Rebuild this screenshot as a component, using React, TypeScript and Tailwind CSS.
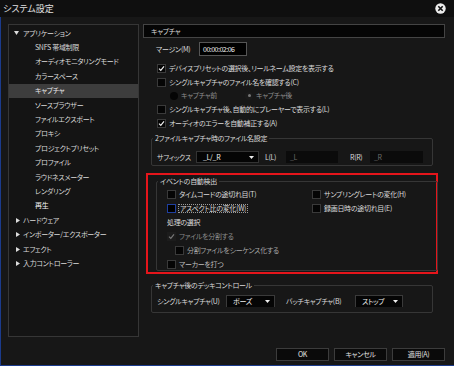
import React from 'react'

const TREE = [
  { label: 'アプリケーション', level: 0, open: true },
  { label: 'SNFS 帯域制限', level: 1 },
  { label: 'オーディオモニタリングモード', level: 1 },
  { label: 'カラースペース', level: 1 },
  { label: 'キャプチャ', level: 1, selected: true },
  { label: 'ソースブラウザー', level: 1 },
  { label: 'ファイルエクスポート', level: 1 },
  { label: 'プロキシ', level: 1 },
  { label: 'プロジェクトプリセット', level: 1 },
  { label: 'プロファイル', level: 1 },
  { label: 'ラウドネスメーター', level: 1 },
  { label: 'レンダリング', level: 1 },
  { label: '再生', level: 1, bright: true },
  { label: 'ハードウェア', level: 0 },
  { label: 'インポーター/エクスポーター', level: 0 },
  { label: 'エフェクト', level: 0 },
  { label: '入力コントローラー', level: 0 },
]

function Check({ checked = false, focused = false, disabled = false }: { checked?: boolean; focused?: boolean; disabled?: boolean }) {
  return (
    <span
      className={
        'w-[9px] h-[9px] shrink-0 flex items-center justify-center border ' +
        (disabled ? 'bg-[#1c1c1c] border-[#1c1c1c]' : focused ? 'bg-black border-[#1f3f9f]' : 'bg-[#050505] border-[#3a3a3a]')
      }
    >
      {checked && (
        <svg width="7" height="7" viewBox="0 0 7 7">
          <path d="M1 3.6 L2.8 5.4 L6 1.4" fill="none" stroke={disabled ? '#777' : '#f0f0f0'} strokeWidth="1.2" />
        </svg>
      )}
    </span>
  )
}

function Row({ label, checked, focused, disabled, muted, className = '' }: { label: string; checked?: boolean; focused?: boolean; disabled?: boolean; muted?: string; className?: string }) {
  return (
    <div className={'flex items-center h-[14px] gap-[3px] whitespace-nowrap ' + className}>
      <Check checked={checked} focused={focused} disabled={disabled} />
      <span className={(muted ?? '') + (focused ? ' outline outline-1 outline-dotted outline-[#9a9a9a] px-[1px]' : '')}>{label}</span>
    </div>
  )
}

function Arrow() {
  return (
    <svg width="5" height="5" viewBox="0 0 5 5" className="ml-[2px]">
      <path d="M0 1 L5 1 L2.5 4 Z" fill="#eee" />
    </svg>
  )
}

function Select({ value, w, legendLike = false }: { value: string; w: string; legendLike?: boolean }) {
  return (
    <div
      className={
        w +
        ' h-[12px] shrink-0 bg-[#050505] flex items-center justify-between pl-[6px] pr-[4px] text-[#eee] ' +
        (legendLike ? 'border-t border-x border-[#3a3a3a]' : 'border border-[#333]')
      }
    >
      <span>{value}</span>
      <Arrow />
    </div>
  )
}

function Group({ title, className = '', children }: { title: string; className?: string; children: React.ReactNode }) {
  return (
    <div className={'relative ml-[8px] w-[282px] border border-[#363636] rounded-[2px] ' + className}>
      <span className="absolute -top-[6px] left-[1px] bg-[#171717] px-[2px] leading-[11px]">{title}</span>
      {children}
    </div>
  )
}

export default function App() {
  return (
    <div className="w-[454px] h-[366px] bg-[#171717] flex flex-col text-[7px] tracking-[-0.3px] leading-none whitespace-nowrap text-[#dadada] font-['Noto_Sans_CJK_JP','Noto_Sans',sans-serif] [font-feature-settings:'palt']">
      <div className="h-[17px] bg-[#0f0f0f] flex items-center justify-between pl-[3px] pr-[8px]">
        <span className="text-[9px] tracking-normal text-[#e0e0e0]">システム設定</span>
        <svg width="11" height="11" viewBox="0 0 11 11">
          <circle cx="5.5" cy="5.5" r="5.2" fill="#ececec" />
          <path d="M3.3 3.3 L7.7 7.7 M7.7 3.3 L3.3 7.7" stroke="#111" strokeWidth="1.6" />
        </svg>
      </div>

      <div className="flex-1 flex border-l border-b border-[#1b3b8c] pl-[7px] pt-[7px]">
        <div className="w-[131px] h-[313px] border border-[#363636] bg-[#141414] pt-[1px]">
          {TREE.map((item) => (
            <div
              key={item.label}
              className={
                'h-[14.4px] flex items-center ' +
                (item.selected ? 'bg-[#3d3d3d] text-[#e8e8e8] ' : '') +
                (item.bright ? 'text-[#f4f4f4] ' : '') +
                (item.level === 0 ? 'pl-[5px]' : 'pl-[26px]')
              }
            >
              {item.level === 0 && (
                <span className="w-[9px] flex items-center">
                  {item.open ? (
                    <svg width="5" height="4" viewBox="0 0 5 4">
                      <path d="M0 0 L5 0 L2.5 4 Z" fill="#ddd" />
                    </svg>
                  ) : (
                    <svg width="4" height="5" viewBox="0 0 4 5" className="ml-[2px]">
                      <path d="M0 0 L4 2.5 L0 5 Z" fill="#ddd" />
                    </svg>
                  )}
                </span>
              )}
              <span>{item.label}</span>
            </div>
          ))}
        </div>

        <div className="ml-[4px] w-[302px] flex flex-col">
          <div className="h-[14px] border border-[#444] bg-[#050505] pl-[7px] flex items-center">キャプチャ</div>

          <div className="mt-[4px] h-[14px] flex items-center pl-[13px]">
            <span className="w-[43px]">マージン(M)</span>
            <div className="w-[48px] h-[14px] border border-[#555] bg-black flex items-center pl-[3px] text-[#f2f2f2] tracking-[-0.5px]">
              00:00:02:06
            </div>
          </div>

          <div className="mt-[5px] pl-[14px]">
            <Row label="デバイスプリセットの選択後、リールネーム設定を表示する" checked className="h-[13px]" />
            <Row label="シングルキャプチャのファイル名を確認する(C)" className="h-[13px]" />
            <div className="h-[13px] flex items-center pl-[13px] text-[#8c8c8c]">
              <div className="w-[75px] flex items-center gap-[3px]">
                <span className="w-[8px] h-[8px] rounded-full bg-[#050505]" />
                <span>キャプチャ前</span>
              </div>
              <div className="flex items-center gap-[3px]">
                <span className="w-[8px] h-[8px] rounded-full bg-[#1a1a1a] flex items-center justify-center">
                  <span className="w-[3px] h-[3px] rounded-full bg-[#777]" />
                </span>
                <span>キャプチャ後</span>
              </div>
            </div>
            <Row label="シングルキャプチャ後、自動的にプレーヤーで表示する(L)" className="h-[13px]" />
            <Row label="オーディオのエラーを自動補正する(A)" checked className="h-[13px]" />
          </div>

          <Group title="2ファイルキャプチャ時のファイル名設定" className="mt-[8px] h-[28px]">
            <div className="pt-[12px] pl-[5px] flex items-center">
              <span className="w-[39px]">サフィックス</span>
              <Select value="_L/_R" w="w-[63px]" />
              <span className="ml-[6px] w-[21px]">L(L)</span>
              <div className="w-[52px] h-[12px] bg-[#0b0b0b] pl-[4px] flex items-center text-[#6c6c6c]">_L</div>
              <span className="ml-[12px] w-[20px]">R(R)</span>
              <div className="w-[53px] h-[12px] bg-[#0b0b0b] pl-[4px] flex items-center text-[#6c6c6c]">_R</div>
            </div>
          </Group>

          <div className="ml-[3px] mt-[7px] w-[292px] h-[101px] border-2 border-[#e5151b] pt-[6px]">
            <Group title="イベントの自動検出" className="ml-[1px] h-[90px]">
              <div className="pt-[5px] pl-[10px]">
                <div className="flex">
                  <Row label="タイムコードの途切れ目(T)" className="w-[145px]" />
                  <Row label="サンプリングレートの変化(H)" />
                </div>
                <div className="flex">
                  <Row label="アスペクト比の変化(W)" focused className="w-[145px]" />
                  <Row label="録画日時の途切れ目(E)" />
                </div>
                <div className="h-[14px] flex items-center">処理の選択</div>
                <Row label="ファイルを分割する" checked disabled muted="text-[#8a8a8a]" />
                <Row label="分割ファイルをシーケンス化する" muted="text-[#a6a6a6]" className="pl-[8px]" />
                <Row label="マーカーを打つ" muted="text-[#bdbdbd]" className="h-[13px]" />
              </div>
            </Group>
          </div>

          <Group title="キャプチャ後のデッキコントロール" className="mt-[11px] h-[28px]">
            <div className="pt-[9px] pl-[5px] flex items-center">
              <span className="w-[69px]">シングルキャプチャ(U)</span>
              <Select value="ポーズ" w="w-[49px]" legendLike />
              <span className="ml-[11px] w-[69px]">バッチキャプチャ(B)</span>
              <Select value="ストップ" w="w-[48px]" legendLike />
            </div>
          </Group>

          <div className="mt-auto mb-[4px] flex justify-end gap-[5px]">
            {['OK', 'キャンセル', '適用(A)'].map((b) => (
              <div key={b} className="w-[53px] h-[13px] border border-[#3c3c3c] bg-[#0a0a0a] flex items-center justify-center text-[#e0e0e0]">
                {b}
              </div>
            ))}
          </div>
        </div>
      </div>
    </div>
  )
}
